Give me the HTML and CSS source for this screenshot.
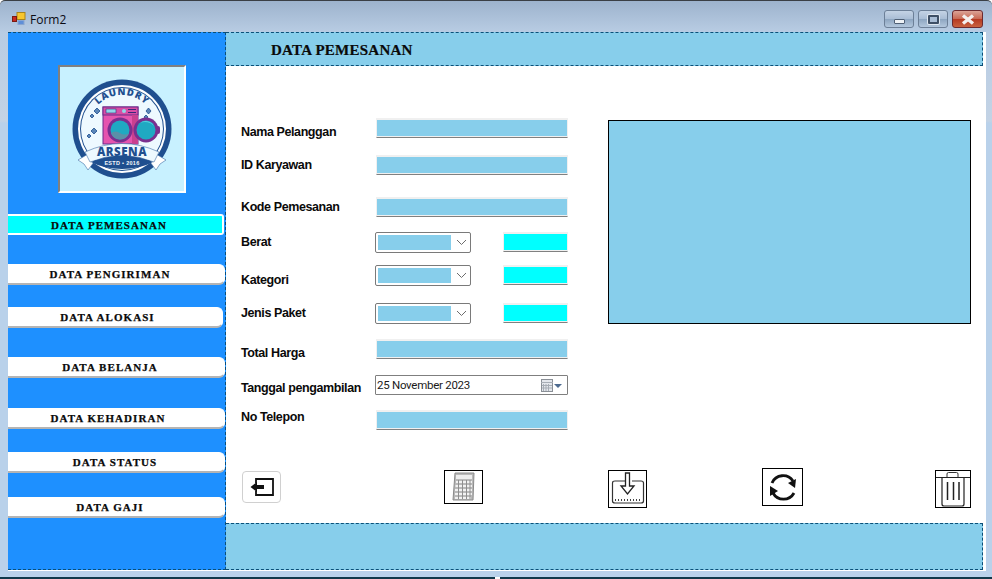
FILE: index.html
```html
<!DOCTYPE html>
<html lang="id">
<head>
<meta charset="utf-8">
<title>Form2</title>
<link rel="stylesheet" href="styles.css">
</head>
<body>
<div class="window">
  <header class="titlebar">
    <svg class="app-icon" width="14" height="14" viewBox="0 0 14 14">
      <rect x="5" y="0.5" width="8" height="7" fill="#f7c62f" stroke="#a9841a" stroke-width="1"/>
      <rect x="0.5" y="4.5" width="4" height="5" fill="#c8281e" stroke="#7a1a12" stroke-width="1"/>
      <rect x="6" y="8.5" width="6" height="4" fill="#5f8fd8" stroke="#8aa6cf" stroke-width="1"/>
    </svg>
    <span class="title-text">Form2</span>
    <div class="controls">
      <div class="ctl"><span class="glyph-min"></span></div>
      <div class="ctl"><span class="glyph-max"></span></div>
      <div class="ctl ctl-close">
        <svg width="16" height="11" viewBox="0 0 16 11"><path d="M3 1.500 L13 9.500 M13 1.500 L3 9.500" stroke="#f4efee" stroke-width="3.400"/></svg>
      </div>
    </div>
  </header>

  <div class="client">
    <aside class="sidebar">
      <div class="logo-box">
        <svg class="logo" width="124" height="124" viewBox="0 0 124 124">
          <defs>
            <path id="arcTop" d="M28 62 A34 34 0 0 1 96 62"/>
          </defs>
          <circle cx="62" cy="62" r="49.5" fill="#1f4f8f"/>
          <circle cx="62" cy="62" r="44" fill="#ffffff"/>
          <circle cx="62" cy="62" r="42" fill="#1f4f8f"/>
          <circle cx="62" cy="62" r="41" fill="#eef9ff"/>
          <text class="logo-arc"><textPath href="#arcTop" startOffset="50%" text-anchor="middle">LAUNDRY</textPath></text>
          <g fill="#5a86b8" stroke="#1f4f8f" stroke-width="0.8">
            <path d="M34 44 l3 -3 l3 3 l-3 3z"/><path d="M30 49 l2 -2 l2 2 l-2 2z"/>
            <path d="M31 64 l3 -3 l3 3 l-3 3z"/><path d="M27 69 l2 -2 l2 2 l-2 2z"/>
            <path d="M86 44 l2.500 -3 l2.500 3 l-2.500 3z"/><path d="M84 50 l2 -2 l2 2 l-2 2z"/>
          </g>
          <rect x="43" y="40" width="35" height="37" fill="#e554ae" stroke="#6a2a8a" stroke-width="1"/>
          <rect x="43" y="40" width="35" height="8" fill="#d84da5" stroke="#6a2a8a" stroke-width="1"/>
          <rect x="46" y="42" width="10" height="4" fill="#8fd6e8" stroke="#3b2a7a" stroke-width="0.6"/>
          <circle cx="64" cy="44" r="2" fill="#8fd6e8"/>
          <rect x="68" y="42" width="8" height="1" fill="#3b2a7a"/>
          <rect x="68" y="45" width="8" height="1" fill="#3b2a7a"/>
          <rect x="72" y="48" width="6" height="29" fill="#c9408f"/>
          <circle cx="60" cy="63" r="12.500" fill="#7a2f8f"/>
          <circle cx="60" cy="63" r="9.500" fill="#1fa9c2"/>
          <path d="M51 66 q4.500 -3 9 0 t9 0 a9.500 9.500 0 0 1 -18 0z" fill="#5b8fa8"/>
          <rect x="96" y="59" width="4" height="8" rx="2" fill="#7a2f8f"/>
          <circle cx="86" cy="63" r="12.500" fill="#7a2f8f"/>
          <circle cx="86" cy="63" r="9.500" fill="#1fa9c2"/>
          <path d="M80 56 a9.500 9.500 0 0 1 14 3 a12 12 0 0 0 -14 -3z" fill="#57cfe0"/>
          <path d="M18 93 L28 87 L34 95 L28 103 L24 97z" fill="#ffffff" stroke="#3f6ea6" stroke-width="0.6"/>
          <path d="M106 93 L96 87 L90 95 L96 103 L100 97z" fill="#ffffff" stroke="#3f6ea6" stroke-width="0.6"/>
          <path d="M25 85 Q62 68 99 85 L94 95 Q62 82 30 95z" fill="#eef9ff" stroke="#3f6ea6" stroke-width="0.6"/>
          <path d="M31 95 Q62 82 93 95 Q80 102 62 102 Q44 102 31 95z" fill="#1f4f8f"/>
          <text class="logo-name" x="62" y="89">ARSENA</text>
          <text class="logo-estd" x="62" y="98">ESTD • 2016</text>
        </svg>
      </div>
      <nav class="menu">
        <div class="menu-item is-active gap-a">DATA PEMESANAN</div>
        <div class="menu-item gap-b">DATA PENGIRIMAN</div>
        <div class="menu-item menu-short gap-c">DATA ALOKASI</div>
        <div class="menu-item gap-d">DATA BELANJA</div>
        <div class="menu-item menu-left gap-e">DATA KEHADIRAN</div>
        <div class="menu-item menu-right gap-f">DATA STATUS</div>
        <div class="menu-item gap-g">DATA GAJI</div>
      </nav>
    </aside>

    <main class="main">
      <div class="page-head">DATA PEMESANAN</div>
      <div class="content">
        <div class="upper">
          <form class="fields">
            <label class="lbl lbl-low">Nama Pelanggan</label>
            <div class="input wide"></div>
            <label class="lbl">ID Karyawan</label>
            <div class="input wide"></div>
            <label class="lbl">Kode Pemesanan</label>
            <div class="input wide"></div>
            <label class="lbl">Berat</label>
            <div class="combo"><span class="combo-fill"></span><svg width="11" height="7" viewBox="0 0 11 7"><path d="M1 1 L5.500 5.500 L10 1" fill="none" stroke="#6d6d6d"/></svg></div>
            <div class="input cyan"></div>
            <label class="lbl lbl-lower">Kategori</label>
            <div class="combo"><span class="combo-fill"></span><svg width="11" height="7" viewBox="0 0 11 7"><path d="M1 1 L5.500 5.500 L10 1" fill="none" stroke="#6d6d6d"/></svg></div>
            <div class="input cyan"></div>
            <label class="lbl">Jenis Paket</label>
            <div class="combo"><span class="combo-fill"></span><svg width="11" height="7" viewBox="0 0 11 7"><path d="M1 1 L5.500 5.500 L10 1" fill="none" stroke="#6d6d6d"/></svg></div>
            <div class="input cyan"></div>
            <label class="lbl lbl-low">Total Harga</label>
            <div class="input wide"></div>
            <label class="lbl lbl-mid">Tanggal pengambilan</label>
            <div class="date">
              <span class="date-text">25 November 2023</span>
              <svg class="cal" width="21" height="13" viewBox="0 0 21 13">
                <rect x="0.500" y="0.500" width="11" height="12" fill="#e4e7ec" stroke="#8a8f96"/>
                <path d="M0 3.500 H12 M2.500 5 V12 M5 5 V12 M7.500 5 V12 M1 6.500 H11 M1 9 H11" stroke="#a7adb5" fill="none"/>
                <path d="M13 5 H21 L17 9z" fill="#4d6a8f"/>
              </svg>
            </div>
            <label class="lbl lbl-top">No Telepon</label>
            <div class="input wide"></div>
          </form>
          <div class="preview"></div>
        </div>
        <div class="actions">
          <button type="button" class="btn btn-back" aria-label="Keluar">
            <svg width="26" height="20" viewBox="0 0 26 20"><path d="M7 6 V2 H24 V18 H7 V14" fill="none" stroke="#111" stroke-width="1.800"/><path d="M1.500 10 L8 5 V8 H15 V12 H8 V15z" fill="#111"/></svg>
          </button>
          <button type="button" class="btn btn-calc" aria-label="Hitung">
            <svg width="24" height="30" viewBox="0 0 24 30">
              <path d="M3 1 H22 L21 28 H1z" fill="#b9b9b9" stroke="#8a8a8a"/>
              <rect x="4" y="3" width="16" height="4" fill="#ededed"/>
              <path d="M4 10 H20 M3.500 14 H20 M3 18 H20 M3 22 H20 M3 26 H19" stroke="#f2f2f2" stroke-width="2"/>
              <path d="M6.500 8 V27 M10.500 8 V27 M14.500 8 V27 M18 8 V27" stroke="#8f8f8f"/>
            </svg>
          </button>
          <button type="button" class="btn btn-save" aria-label="Simpan">
            <svg width="37" height="36" viewBox="0 0 37 36">
              <path d="M16 10 H6 Q3.500 10 3.500 12 V30 Q3.500 32 6 32 H32 Q34.500 32 34.500 30 V12 Q34.500 10 32 10 H23" fill="none" stroke="#333" stroke-width="1.200"/>
              <path d="M16.500 2 H20.500 V15 H25 L18.500 23 L12 15 H16.500z" fill="#fff" stroke="#222" stroke-width="1.300"/>
              <path d="M6 29 H32" stroke="#444" stroke-width="2" stroke-dasharray="1 2"/>
            </svg>
          </button>
          <button type="button" class="btn btn-sync" aria-label="Muat ulang">
            <svg width="32" height="30" viewBox="0 0 32 30">
              <path d="M5 11 A12 12 0 0 1 26 9" fill="none" stroke="#111" stroke-width="2.800"/>
              <path d="M27 21 A12 12 0 0 1 6 21" fill="none" stroke="#111" stroke-width="2.800"/>
              <path d="M29 7 L28 16 L21 11z" fill="#111"/>
              <path d="M3 24 L3 14 L11 19z" fill="#111"/>
            </svg>
          </button>
          <button type="button" class="btn btn-trash" aria-label="Hapus">
            <svg width="34" height="36" viewBox="0 0 34 36">
              <path d="M0 6.500 H34" stroke="#222" fill="none"/>
              <path d="M11 6 V3 Q11 1.500 12.500 1.500 H20.500 Q22 1.500 22 3 V6" fill="none" stroke="#333"/>
              <path d="M6 6.500 V33 Q6 35 8 35 H26 Q28 35 28 33 V6.500" fill="none" stroke="#222" stroke-width="1.200"/>
              <path d="M11.500 11 V29 M17.500 11 V29 M23 11 V29" stroke="#222" stroke-width="1.500"/>
            </svg>
          </button>
        </div>
      </div>
      <div class="page-foot"></div>
    </main>
  </div>
  <div class="bottom-frame"></div>
</div>
</body>
</html>
```

FILE: styles.css
```css
* { box-sizing: border-box; }

html, body {
  margin: 0;
  padding: 0;
  width: 992px;
  height: 579px;
  overflow: hidden;
}

.window {
  width: 992px;
  height: 579px;
  display: flex;
  flex-direction: column;
  background: linear-gradient(#9db3cd 0, #b8cce3 31px, #c3d3e5 120px, #b9d1ea 122px);
  border-top: 1px solid #3a3f45;
  border-radius: 5px 5px 0 0;
  font-family: "Liberation Sans", Arial, sans-serif;
}

/* title bar */
.titlebar {
  height: 31px;
  flex: none;
  display: flex;
  align-items: flex-start;
  padding: 11px 9px 0 12px;
}
.app-icon { flex: none; }
.title-text {
  margin-left: 4px;
  font: 12px/16px "Open Sans", "Liberation Sans", sans-serif;
  color: #0a0a12;
}
.controls {
  margin-left: auto;
  margin-top: -2px;
  display: flex;
  gap: 4px;
}
.ctl {
  width: 30px;
  height: 18px;
  display: flex;
  align-items: center;
  justify-content: center;
  border: 1px solid #6c7f97;
  border-radius: 3px;
  background: linear-gradient(#c4d3e5 0, #a9bdd5 50%, #8ea6c1 52%, #b3c7dd 100%);
}
.ctl-close {
  width: 31px;
  border-color: #6d2a2e;
  background: linear-gradient(#dba396 0, #c96a55 48%, #b63a22 52%, #c9623f 100%);
}
.glyph-min {
  width: 11px;
  height: 5px;
  margin-top: 4px;
  background: #eef2f6;
  border: 1px solid #4f6076;
  border-radius: 1px;
}
.glyph-max {
  width: 11px;
  height: 9px;
  background: #a9bdd5;
  border: 2px solid #3e4f65;
  box-shadow: 0 0 0 1px #dfe7f0;
  border-radius: 1px;
}

/* client area */
.client {
  height: 539px;
  flex: none;
  margin: 0 6px 0 8px;
  display: flex;
  background: #ffffff;
}

.sidebar {
  width: 218px;
  flex: none;
  height: 538px;
  background: #1e90ff;
  border: 1px dashed #0b4f78;
  border-left: 0;
}

.logo-box {
  width: 128px;
  height: 128px;
  margin: 32px 0 0 50px;
  background: #c8f1ff;
  border-style: solid;
  border-width: 2px;
  border-color: #808080 #ffffff #ffffff #808080;
}
.logo { display: block; }
.logo-arc {
  font: 800 9.500px "Open Sans", "Liberation Sans", sans-serif;
  letter-spacing: 0.800px;
  fill: #1f4f8f;
}
.logo-name {
  font: 800 11.500px "Open Sans", "Liberation Sans", sans-serif;
  letter-spacing: 0.500px;
  fill: #1f4f8f;
  text-anchor: middle;
}
.logo-estd {
  font: 700 5.500px "Liberation Sans", sans-serif;
  fill: #f3f7fb;
  text-anchor: middle;
  letter-spacing: 0.300px;
}

.menu {
  display: flex;
  flex-direction: column;
}
.menu-item {
  width: 217px;
  height: 21px;
  padding-right: 12px;
  display: flex;
  align-items: center;
  justify-content: center;
  background: #ffffff;
  border: 1px solid #ffffff;
  border-bottom: 2px solid #b4b4b4;
  border-left: 0;
  border-radius: 0 6px 6px 0;
  font: 700 11px "Liberation Serif", "Times New Roman", serif;
  letter-spacing: 1.050px;
  -webkit-text-stroke: 0.25px #0a0a0a;
  color: #0a0a0a;
  white-space: nowrap;
}
.menu-item.is-active {
  width: 216px;
  background: #00ffff;
  border: 2px solid #ffffff;
  border-left: 0;
  border-radius: 0 3px 3px 0;
}
.menu-short { width: 215px; padding-right: 15px; }
.menu-left { padding-right: 16px; }
.menu-right { padding-right: 2px; }
.gap-a { margin-top: 21px; }
.gap-b { margin-top: 29px; }
.gap-c { margin-top: 22px; }
.gap-d { margin-top: 29px; }
.gap-e { margin-top: 30px; }
.gap-f { margin-top: 23px; }
.gap-g { margin-top: 24px; }

/* main */
.main {
  flex: 1;
  min-width: 0;
  display: flex;
  flex-direction: column;
}
.page-head {
  height: 34px;
  flex: none;
  margin-right: 3px;
  padding: 9px 0 0 45px;
  background: #87ceeb;
  border: 1px dashed #0b4f78;
  border-left: 0;
  font: 700 15px "Liberation Serif", "Times New Roman", serif;
  letter-spacing: 0.250px;
  -webkit-text-stroke: 0.2px #0a0a0a;
  color: #0a0a0a;
}
.content {
  height: 457px;
  flex: none;
  padding: 52px 0 0 15px;
}
.upper {
  display: flex;
  align-items: flex-start;
}

.fields {
  display: grid;
  width: 327px;
  grid-template-columns: 134px 96px 32px 65px;
  grid-template-rows: 37px 42px 35px 33px 38px 36px 36px 35px 20px;
  align-items: start;
}
.lbl {
  grid-column: 1;
  margin-top: 3px;
  font: 700 12.500px/14px "Liberation Sans", Arial, sans-serif;
  letter-spacing: -0.400px;
  color: #0a0a0a;
  white-space: nowrap;
}
.lbl-low { margin-top: 7px; }
.lbl-lower { margin-top: 8px; }
.lbl-mid { margin-top: 6px; }
.lbl-top { margin-top: 0; }

.input {
  height: 20px;
  background: #87ceeb;
  border: 1px solid #f0f0f0;
  border-top-width: 2px;
  border-bottom-color: #808080;
  box-shadow: inset 0 -1px 0 #f0f0f0;
}
.wide {
  grid-column: 2 / 5;
  margin-left: 1px;
}
.cyan {
  grid-column: 4;
  background: #00ffff;
}
.combo {
  grid-column: 2;
  height: 21px;
  display: flex;
  align-items: center;
  padding: 0 3px 0 2px;
  background: #ffffff;
  border: 1px solid #7a7a7a;
  border-radius: 2px;
}
.combo-fill {
  width: 73px;
  height: 15px;
  background: #87ceeb;
}
.combo svg { margin-left: 5px; }
.date {
  grid-column: 2 / 5;
  height: 20px;
  display: flex;
  align-items: center;
  justify-content: space-between;
  padding: 0 5px 0 1px;
  border: 1px solid #7f7f7f;
  border-radius: 1px;
  background: #ffffff;
}
.date-text {
  font: 11.500px Roboto, "Liberation Sans", sans-serif;
  letter-spacing: -0.270px;
  color: #1a1a1a;
}

.preview {
  width: 363px;
  height: 204px;
  margin: 2px 0 0 40px;
  background: #87ceeb;
  border: 1px solid #000000;
}

/* action buttons */
.actions {
  display: flex;
  align-items: flex-start;
  margin-top: 38px;
  padding-left: 1px;
}
.btn {
  padding: 0;
  display: flex;
  align-items: center;
  justify-content: center;
  background: #ffffff;
  border: 1px solid #000000;
}
.btn-back {
  width: 39px;
  height: 32px;
  margin-top: 3px;
  border: 1px solid #d0d0d0;
  border-radius: 4px;
}
.btn-calc {
  width: 39px;
  height: 34px;
  margin: 2px 0 0 163px;
}
.btn-save {
  width: 39px;
  height: 38px;
  margin: 2px 0 0 125px;
}
.btn-sync {
  width: 41px;
  height: 38px;
  margin-left: 115px;
}
.btn-trash {
  width: 36px;
  height: 38px;
  margin: 2px 0 0 132px;
}

.page-foot {
  height: 47px;
  flex: none;
  margin-right: 3px;
  background: #87ceeb;
  border: 1px dashed #0b4f78;
  border-left: 0;
}

.bottom-frame {
  position: relative;
  flex: 1;
  background: #b9d1ea;
  border-bottom: 2px solid #10384a;
}
.bottom-frame::after {
  content: "";
  position: absolute;
  left: 495px;
  bottom: -2px;
  width: 5px;
  height: 2px;
  background: #ffffff;
}
```
